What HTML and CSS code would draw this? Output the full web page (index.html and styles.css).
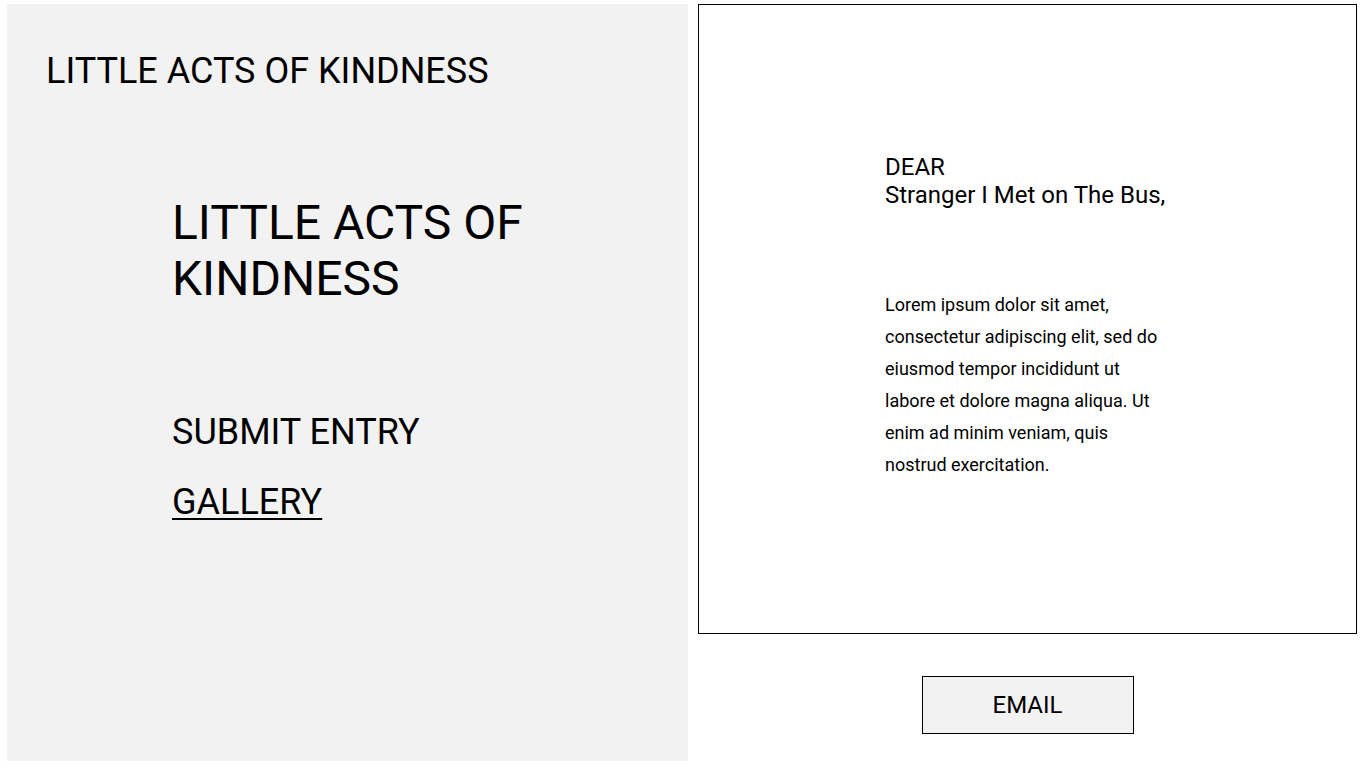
FILE: index.html
```html
<!DOCTYPE html>
<html lang="en">
<head>
<meta charset="utf-8">
<title>Little Acts of Kindness</title>
<link rel="stylesheet" href="styles.css">
</head>
<body>
<div class="page">
  <aside class="side">
    <div class="brand">LITTLE ACTS OF KINDNESS</div>
    <div class="side-inner">
      <h1 class="hero">LITTLE ACTS OF<br>KINDNESS</h1>
      <nav class="nav">
        <a class="nav-link" href="#">SUBMIT ENTRY</a>
        <a class="nav-link underlined" href="#">GALLERY</a>
      </nav>
    </div>
  </aside>
  <main class="main">
    <section class="card">
      <div class="letter">
        <div class="salutation">DEAR<br>Stranger I Met on The Bus,</div>
        <p class="body-text">Lorem ipsum dolor sit amet, consectetur adipiscing elit, sed do eiusmod tempor incididunt ut labore et dolore magna aliqua. Ut enim ad minim veniam, quis nostrud exercitation.</p>
      </div>
    </section>
    <div class="actions">
      <button class="email-btn" type="button">EMAIL</button>
    </div>
  </main>
</div>
</body>
</html>
```
FILE: styles.css
```css
* { box-sizing: border-box; }
html, body { margin: 0; padding: 0; background: #fff; }
body { font-family: Roboto, "Liberation Sans", sans-serif; color: #000; }

.page {
  display: grid;
  grid-template-columns: 681px 659px;
  column-gap: 10px;
  padding: 4px 9px 7px 7px;
  height: 768px;
}

.side {
  background: #f2f2f2;
  padding: 46px 0 0 39px;
}
.brand { font-size: 36px; line-height: 42px; }
.side-inner { padding: 103px 0 0 126px; }
.hero { margin: 0; font-size: 48px; font-weight: 400; line-height: 56px; }
.nav { display: flex; flex-direction: column; gap: 28px; padding-top: 104px; }
.nav-link { font-size: 36px; line-height: 42px; color: #000; text-decoration: none; align-self: flex-start; }
.nav-link.underlined { text-decoration: underline; text-underline-offset: 4px; text-decoration-thickness: 2px; }

.main { display: flex; flex-direction: column; }
.card {
  height: 630px;
  border: 1px solid #000;
  display: flex;
  justify-content: center;
  padding-top: 148px;
}
.letter { width: 285px; }
.salutation { font-size: 24px; line-height: 28px; }
.body-text { margin: 80px 0 0; font-size: 18px; line-height: 32px; }

.actions { display: flex; justify-content: center; padding-top: 42px; }
.email-btn {
  width: 212px;
  height: 58px;
  background: #f2f2f2;
  border: 1px solid #000;
  font-family: Roboto, "Liberation Sans", sans-serif;
  font-size: 24px;
  color: #000;
  padding: 0;
  border-radius: 0;
}
```
